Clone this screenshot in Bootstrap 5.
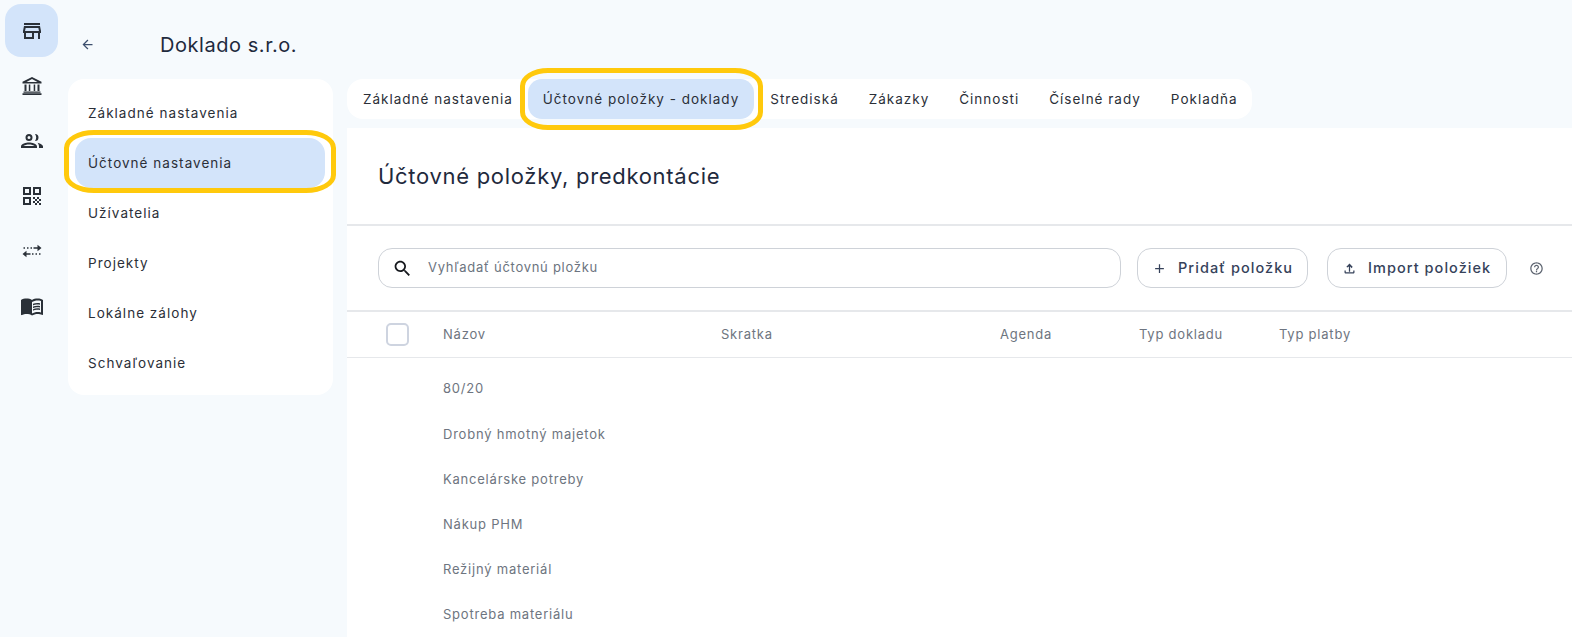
<!DOCTYPE html>
<html lang="sk">
<head>
<meta charset="utf-8">
<title>Doklado s.r.o.</title>
<link href="https://cdn.jsdelivr.net/npm/bootstrap@5.3.0/dist/css/bootstrap.min.css" rel="stylesheet">
<style>
html,body{height:637px;overflow:hidden}
body{background:#f6fafd;font-family:"Inter","Liberation Sans",sans-serif;color:#2b2f38}
.app-shell{height:637px;overflow:hidden}
.rail{width:68px;flex:none;padding:4px 0 0 5px;gap:0}
.rail-btn{width:53px;height:53px;border-radius:16px;display:flex;align-items:center;justify-content:center;margin-bottom:2px;color:#2a3038}
.rail-btn.on{background:#d3e4fa}
.rail-btn svg{width:24px;height:24px;fill:currentColor}
.side-col{width:265px;flex:none}
.side-head{height:75px;padding-top:14px;align-items:center}
.back-ico{width:15px;height:15px;fill:#3d4f6e;margin-left:12px;margin-right:65px}
.org-name{font-size:20px;letter-spacing:.55px;color:#1f2a3d;margin:0;font-weight:400;line-height:1}
.side-card{background:#fff;border-radius:16px;padding:9px 8px 7px 7px;margin-top:4px}
.side-item{height:50px;display:flex;align-items:center;padding-left:13px;border-radius:16px;font-size:13.5px;letter-spacing:1.03px;color:#2b2f38}
.side-item.on{background:#d3e4fa;border:0}
.main-col{margin-left:14px;min-width:0;flex:1;padding-top:79px}
.tab-strip{display:inline-flex;background:#fff;border-radius:16px;height:40px;align-items:center;padding:0 0 0 16px;width:905px}
.tab-link{font-size:13.5px;letter-spacing:1px;color:#2b2f38;white-space:nowrap;margin-right:30px}
.tab-link.on{background:#d3e4fa;border-radius:14px;height:40px;display:flex;align-items:center;padding:0 15px;margin-left:-15px;margin-right:16px}
.pane{background:#fff;margin-top:9px;height:509px}
.pane-title{height:98px;display:flex;align-items:center;padding:0 0 0 31px;border-bottom:2px solid #e6e8eb;margin:0;font-size:22px;letter-spacing:.7px;font-weight:400;color:#1f2a3d}
.tool-row{height:86px;padding:0 28px 0 31px;gap:16px;border-bottom:2px solid #e6e8eb;align-items:center}
.search-box{flex:1;height:40px;border:1px solid #ced2d8;border-radius:14px;display:flex;align-items:center;padding-left:13px;gap:15px;color:#6c7480;font-size:13px;letter-spacing:.72px}
.search-box svg{width:21px;height:21px;fill:#15181d;flex:none}
.tool-btn{height:40px;border:1px solid #ced2d8;border-radius:14px;background:#fff;color:#36425a;font-size:14.5px;font-weight:500;letter-spacing:1.05px;display:flex;align-items:center;padding:0 14px;gap:11px;white-space:nowrap;flex:none}
.tool-btn svg{width:15px;height:15px;fill:#36425a;flex:none}
.tool-btn.wide{width:171px;padding-right:0}
.tool-btn.wider{width:180px;margin-left:3px;padding-right:0}
.help-ico{width:15px;height:15px;fill:#5d6470;margin-left:6px;flex:none}
.data-tbl{table-layout:fixed;width:100%;margin:0}
.data-tbl th,.data-tbl td{border:0;background:transparent;padding:0;font-size:13px;font-weight:400;letter-spacing:.78px;color:#6e7580;vertical-align:middle}
.data-tbl thead th{height:45px;border-bottom:1px solid #e6e8eb}
.data-tbl tbody td{height:45px}
.data-tbl tbody tr:first-child td{height:55px;padding-top:8px}
.check-box{display:block;width:23px;height:23px;border:2px solid #ced4e0;border-radius:5px;margin-left:39px}
.mark-ring{position:absolute;border:5px solid #ffc90c;pointer-events:none}
.ring-a{left:64px;top:130px;width:272px;height:63px;border-radius:30px / 18px}
.ring-b{left:520px;top:68px;width:243px;height:62px;border-radius:28px / 18px}
</style>
</head>
<body>
<div class="app-shell d-flex position-relative">
  <nav class="rail d-flex flex-column">
    <div class="rail-btn on"><svg viewBox="0 0 24 24"><path d="M20 4H4v2h16V4zm1 10v-2l-1-5H4l-1 5v2h1v6h10v-6h4v6h2v-6h1zm-9 4H6v-4h6v4zm-6.96-6l.6-3h12.72l.6 3H5.04z"/></svg></div>
    <div class="rail-btn"><svg viewBox="0 0 24 24"><path fill-rule="evenodd" d="M12 3 21.500 7.800V9.500H2.500V7.800zM12 5 6.500 8h11zM4.500 10.500h2V17h-2zM8.800 10.500h1.500V17H8.800zM13.700 10.500h1.500V17h-1.500zM17.500 10.500h2V17h-2zM3.500 17.500h17v1.200h-17zM2.500 19.200h19V21h-19z"/></svg></div>
    <div class="rail-btn"><svg viewBox="0 0 24 24"><path d="M9 12a3.5 3.5 0 1 0 0-7 3.5 3.5 0 0 0 0 7zm0-5a1.5 1.5 0 1 1 0 3 1.5 1.5 0 0 1 0-3zM9 13.5c-2.9 0-8 1.4-8 4V19h16v-1.5c0-2.6-5.1-4-8-4zM3.4 17c.8-.9 3.500-1.500 5.600-1.500s4.800.6 5.600 1.500H3.400zM15 5a3.500 3.500 0 0 1 0 7c.8-1 1.200-2.200 1.200-3.500S15.800 6 15 5zM17.500 13.700c2 .6 5.500 1.800 5.500 3.800V19h-4v-1.500c0-1.500-.6-2.800-1.500-3.800z"/></svg></div>
    <div class="rail-btn"><svg viewBox="0 0 24 24"><path d="M3 11h8V3H3v8zm2-6h4v4H5V5zM3 21h8v-8H3v8zm2-6h4v4H5v-4zM13 3v8h8V3h-8zm6 6h-4V5h4v4zM19 19h2v2h-2zM13 13h2v2h-2zM15 15h2v2h-2zM13 17h2v2h-2zM15 19h2v2h-2zM17 17h2v2h-2zM17 13h2v2h-2zM19 15h2v2h-2z"/></svg></div>
    <div class="rail-btn"><svg viewBox="0 0 24 24"><path d="M3.500 8.300h1.500v1.400H3.500zM7 8.300h1.500v1.400H7zM10.500 8.300h1.500v1.400h-1.500zM13.500 8.200h4V5.800l4 3.200-4 3.200V9.800h-4zM10.500 15.800h-4v2.400l-4-3.200 4-3.200v2.400h4zM12 14.300h1.500v1.400H12zM15.500 14.300H17v1.400h-1.500zM19 14.300h1.500v1.400H19z"/></svg></div>
    <div class="rail-btn"><svg viewBox="0 0 24 24"><path d="M21 5c-1.110-.35-2.330-.5-3.500-.5-1.950 0-4.050.4-5.500 1.500-1.450-1.100-3.550-1.500-5.500-1.500S2.450 4.900 1 6v14.650c0 .25.25.5.5.5.1 0 .15-.05.25-.05C3.100 20.450 5.050 20 6.500 20c1.950 0 4.050.4 5.500 1.500 1.350-.85 3.800-1.500 5.500-1.500 1.650 0 3.350.3 4.750 1.050.1.05.15.05.25.05.25 0 .5-.25.5-.5V6c-.6-.45-1.250-.75-2-1zm0 13.500c-1.100-.35-2.300-.5-3.500-.5-1.700 0-4.150.65-5.500 1.500V8c1.350-.85 3.800-1.500 5.500-1.500 1.200 0 2.400.15 3.500.5v11.500z"/><path d="M17.500 10.500c.88 0 1.730.09 2.500.26V9.240c-.79-.15-1.640-.24-2.500-.24-1.700 0-3.240.29-4.500.83v1.660c1.130-.64 2.700-.99 4.500-.99zM13 12.490v1.660c1.130-.64 2.700-.99 4.500-.99.88 0 1.730.09 2.500.26V11.900c-.79-.15-1.640-.24-2.500-.24-1.700 0-3.240.3-4.500.83zM17.500 14.330c-1.700 0-3.240.29-4.500.83v1.660c1.130-.64 2.700-.99 4.500-.99.88 0 1.730.09 2.500.26v-1.520c-.79-.16-1.640-.24-2.500-.24z"/></svg></div>
  </nav>
  <aside class="side-col">
    <div class="side-head d-flex">
      <svg class="back-ico" viewBox="0 0 24 24"><path d="M20 11H7.830l5.590-5.590L12 4l-8 8 8 8 1.410-1.410L7.830 13H20v-2z"/></svg>
      <h1 class="org-name">Doklado s.r.o.</h1>
    </div>
    <div class="side-card">
      <div class="side-item">Základné nastavenia</div>
      <div class="side-item on">Účtovné nastavenia</div>
      <div class="side-item">Užívatelia</div>
      <div class="side-item">Projekty</div>
      <div class="side-item">Lokálne zálohy</div>
      <div class="side-item">Schvaľovanie</div>
    </div>
  </aside>
  <main class="main-col">
    <div class="tab-strip">
      <span class="tab-link">Základné nastavenia</span>
      <span class="tab-link on">Účtovné položky - doklady</span>
      <span class="tab-link">Strediská</span>
      <span class="tab-link">Zákazky</span>
      <span class="tab-link">Činnosti</span>
      <span class="tab-link">Číselné rady</span>
      <span class="tab-link">Pokladňa</span>
    </div>
    <section class="pane">
      <h2 class="pane-title">Účtovné položky, predkontácie</h2>
      <div class="tool-row d-flex">
        <div class="search-box"><svg viewBox="0 0 24 24"><path d="M15.500 14h-.79l-.28-.27C15.410 12.590 16 11.110 16 9.500 16 5.910 13.090 3 9.500 3S3 5.910 3 9.500 5.910 16 9.500 16c1.610 0 3.090-.59 4.230-1.570l.27.28v.79l5 4.990L20.490 19l-4.990-5zm-6 0C7.010 14 5 11.990 5 9.500S7.010 5 9.500 5 14 7.010 14 9.500 11.990 14 9.500 14z"/></svg><span>Vyhľadať účtovnú pložku</span></div>
        <button type="button" class="tool-btn wide"><svg viewBox="0 0 24 24"><path d="M19 13h-6v6h-2v-6H5v-2h6V5h2v6h6v2z"/></svg><span>Pridať položku</span></button>
        <button type="button" class="tool-btn wider"><svg viewBox="0 0 24 24"><path d="M18 15v3H6v-3H4v3c0 1.100.9 2 2 2h12c1.100 0 2-.9 2-2v-3h-2zM7 9l1.410 1.410L11 8.830V17h2V8.830l2.590 2.580L17 9l-5-5-5 5z"/></svg><span>Import položiek</span></button>
        <svg class="help-ico" viewBox="0 0 24 24"><path d="M11 18h2v-2h-2v2zm1-16C6.480 2 2 6.480 2 12s4.480 10 10 10 10-4.480 10-10S17.520 2 12 2zm0 18c-4.410 0-8-3.590-8-8s3.590-8 8-8 8 3.590 8 8-3.590 8-8 8zm0-14c-2.210 0-4 1.790-4 4h2c0-1.100.9-2 2-2s2 .9 2 2c0 2-3 1.750-3 5h2c0-2.250 3-2.500 3-5 0-2.210-1.790-4-4-4z"/></svg>
      </div>
      <table class="table data-tbl">
        <colgroup><col style="width:96px"><col style="width:278px"><col style="width:279px"><col style="width:139px"><col style="width:140px"><col></colgroup>
        <thead><tr><th><span class="check-box"></span></th><th>Názov</th><th>Skratka</th><th>Agenda</th><th>Typ dokladu</th><th>Typ platby</th></tr></thead>
        <tbody>
          <tr><td></td><td>80/20</td><td></td><td></td><td></td><td></td></tr>
          <tr><td></td><td>Drobný hmotný majetok</td><td></td><td></td><td></td><td></td></tr>
          <tr><td></td><td>Kancelárske potreby</td><td></td><td></td><td></td><td></td></tr>
          <tr><td></td><td>Nákup PHM</td><td></td><td></td><td></td><td></td></tr>
          <tr><td></td><td>Režijný materiál</td><td></td><td></td><td></td><td></td></tr>
          <tr><td></td><td>Spotreba materiálu</td><td></td><td></td><td></td><td></td></tr>
        </tbody>
      </table>
    </section>
  </main>
  <div class="mark-ring ring-a"></div>
  <div class="mark-ring ring-b"></div>
</div>
<script src="https://cdn.jsdelivr.net/npm/bootstrap@5.3.0/dist/js/bootstrap.bundle.min.js"></script>
</body>
</html>
